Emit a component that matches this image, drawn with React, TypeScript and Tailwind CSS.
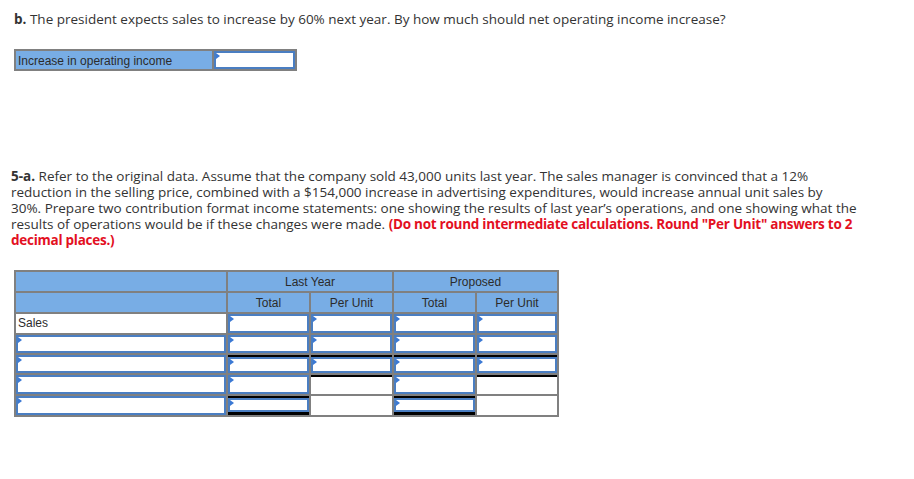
import React from "react";

function Inp({ topLine = false, bottomLine = false, h = 21 }: { topLine?: boolean; bottomLine?: boolean; h?: number }) {
  return (
    <div className="flex flex-col" style={{ height: h - 2 }}>
      {topLine && <div className="h-[2px] bg-black shrink-0" />}
      <div className="relative flex-1 border-2 border-[#4a7ec2] bg-white">
        <span className="absolute left-0 top-0 h-0 w-0 border-y-[3px] border-l-[4px] border-y-transparent border-l-[#3b79d4]" />
      </div>
      {bottomLine && <div className="h-[3px] bg-black shrink-0" />}
    </div>
  );
}

function Blank({ topLine = false, h = 21 }: { topLine?: boolean; h?: number }) {
  return (
    <div className="flex flex-col" style={{ height: h - 2 }}>
      {topLine && <div className="h-[2px] bg-black shrink-0" />}
    </div>
  );
}

export default function App() {
  const td = "border-2 border-[#808080] p-0 align-top";
  const hd = "border-2 border-[#808080] p-0 pt-[1px] bg-[#78ade5] text-center align-middle";
  return (
    <div className="w-[914px] h-[479px] bg-white text-[#333] font-['Open_Sans',sans-serif] text-[13.5px] leading-4">
      <div className="pl-[14px] pt-[11px] whitespace-nowrap">
        <b>b.</b> The president expects sales to increase by 60% next year. By how much should net operating income increase?
      </div>

      <div className="ml-[14px] mt-[22px] flex h-[22px] w-[283px] border-2 border-[#808080] font-['Liberation_Sans',Arial,sans-serif] text-[12px]">
        <div className="flex w-[198px] items-center border-r-2 border-[#808080] bg-[#78ade5] pl-[2px] pt-[1px] text-[#2b2b2b]">
          Increase in operating income
        </div>
        <div className="relative flex-1 border-2 border-[#4a7ec2] bg-white">
          <span className="absolute left-0 top-0 h-0 w-0 border-y-[3px] border-l-[4px] border-y-transparent border-l-[#3b79d4]" />
        </div>
      </div>

      <p className="ml-[11px] mt-[97px] whitespace-nowrap">
        <b>5-a.</b> Refer to the original data. Assume that the company sold 43,000 units last year. The sales manager is convinced that a 12%
        <br />
        reduction in the selling price, combined with a $154,000 increase in advertising expenditures, would increase annual unit sales by
        <br />
        30%. Prepare two contribution format income statements: one showing the results of last year’s operations, and one showing what the
        <br />
        results of operations would be if these changes were made.{" "}
        <b className="text-[#e3101f] tracking-[-0.26px]">(Do not round intermediate calculations. Round "Per Unit" answers to 2</b>
        <br />
        <b className="text-[#e3101f] tracking-[-0.26px]">decimal places.)</b>
      </p>

      <table className="ml-[14px] mt-[22px] table-fixed border-collapse font-['Liberation_Sans',Arial,sans-serif] text-[12px] leading-4 text-[#2b2b2b]">
        <colgroup>
          <col className="w-[212px]" />
          <col className="w-[83px]" />
          <col className="w-[83px]" />
          <col className="w-[83px]" />
          <col className="w-[82px]" />
        </colgroup>
        <tbody>
          <tr className="h-[21px]">
            <td className={hd} />
            <td colSpan={2} className={`${hd} border-b border-b-black`}>Last Year</td>
            <td colSpan={2} className={`${hd} border-b border-b-black`}>Proposed</td>
          </tr>
          <tr className="h-[21px]">
            <td className={hd} />
            <td className={hd}>Total</td>
            <td className={hd}>Per Unit</td>
            <td className={hd}>Total</td>
            <td className={hd}>Per Unit</td>
          </tr>
          <tr>
            <td className={`${td} h-[21px] pl-[2px] pt-[1px] align-middle`}>Sales</td>
            <td className={td}><Inp /></td>
            <td className={td}><Inp /></td>
            <td className={td}><Inp /></td>
            <td className={td}><Inp /></td>
          </tr>
          <tr>
            <td className={td}><Inp h={20} /></td>
            <td className={td}><Inp h={20} /></td>
            <td className={td}><Inp h={20} /></td>
            <td className={td}><Inp h={20} /></td>
            <td className={td}><Inp h={20} /></td>
          </tr>
          <tr>
            <td className={td}><Inp h={20} /></td>
            <td className={td}><Inp h={20} topLine /></td>
            <td className={td}><Inp h={20} topLine /></td>
            <td className={td}><Inp h={20} topLine /></td>
            <td className={td}><Inp h={20} topLine /></td>
          </tr>
          <tr>
            <td className={td}><Inp /></td>
            <td className={td}><Inp /></td>
            <td className={td}><Blank topLine /></td>
            <td className={td}><Inp /></td>
            <td className={td}><Blank topLine /></td>
          </tr>
          <tr>
            <td className={td}><Inp /></td>
            <td className={td}><Inp topLine bottomLine /></td>
            <td className={td}><Blank /></td>
            <td className={td}><Inp topLine bottomLine /></td>
            <td className={td}><Blank /></td>
          </tr>
        </tbody>
      </table>
    </div>
  );
}
